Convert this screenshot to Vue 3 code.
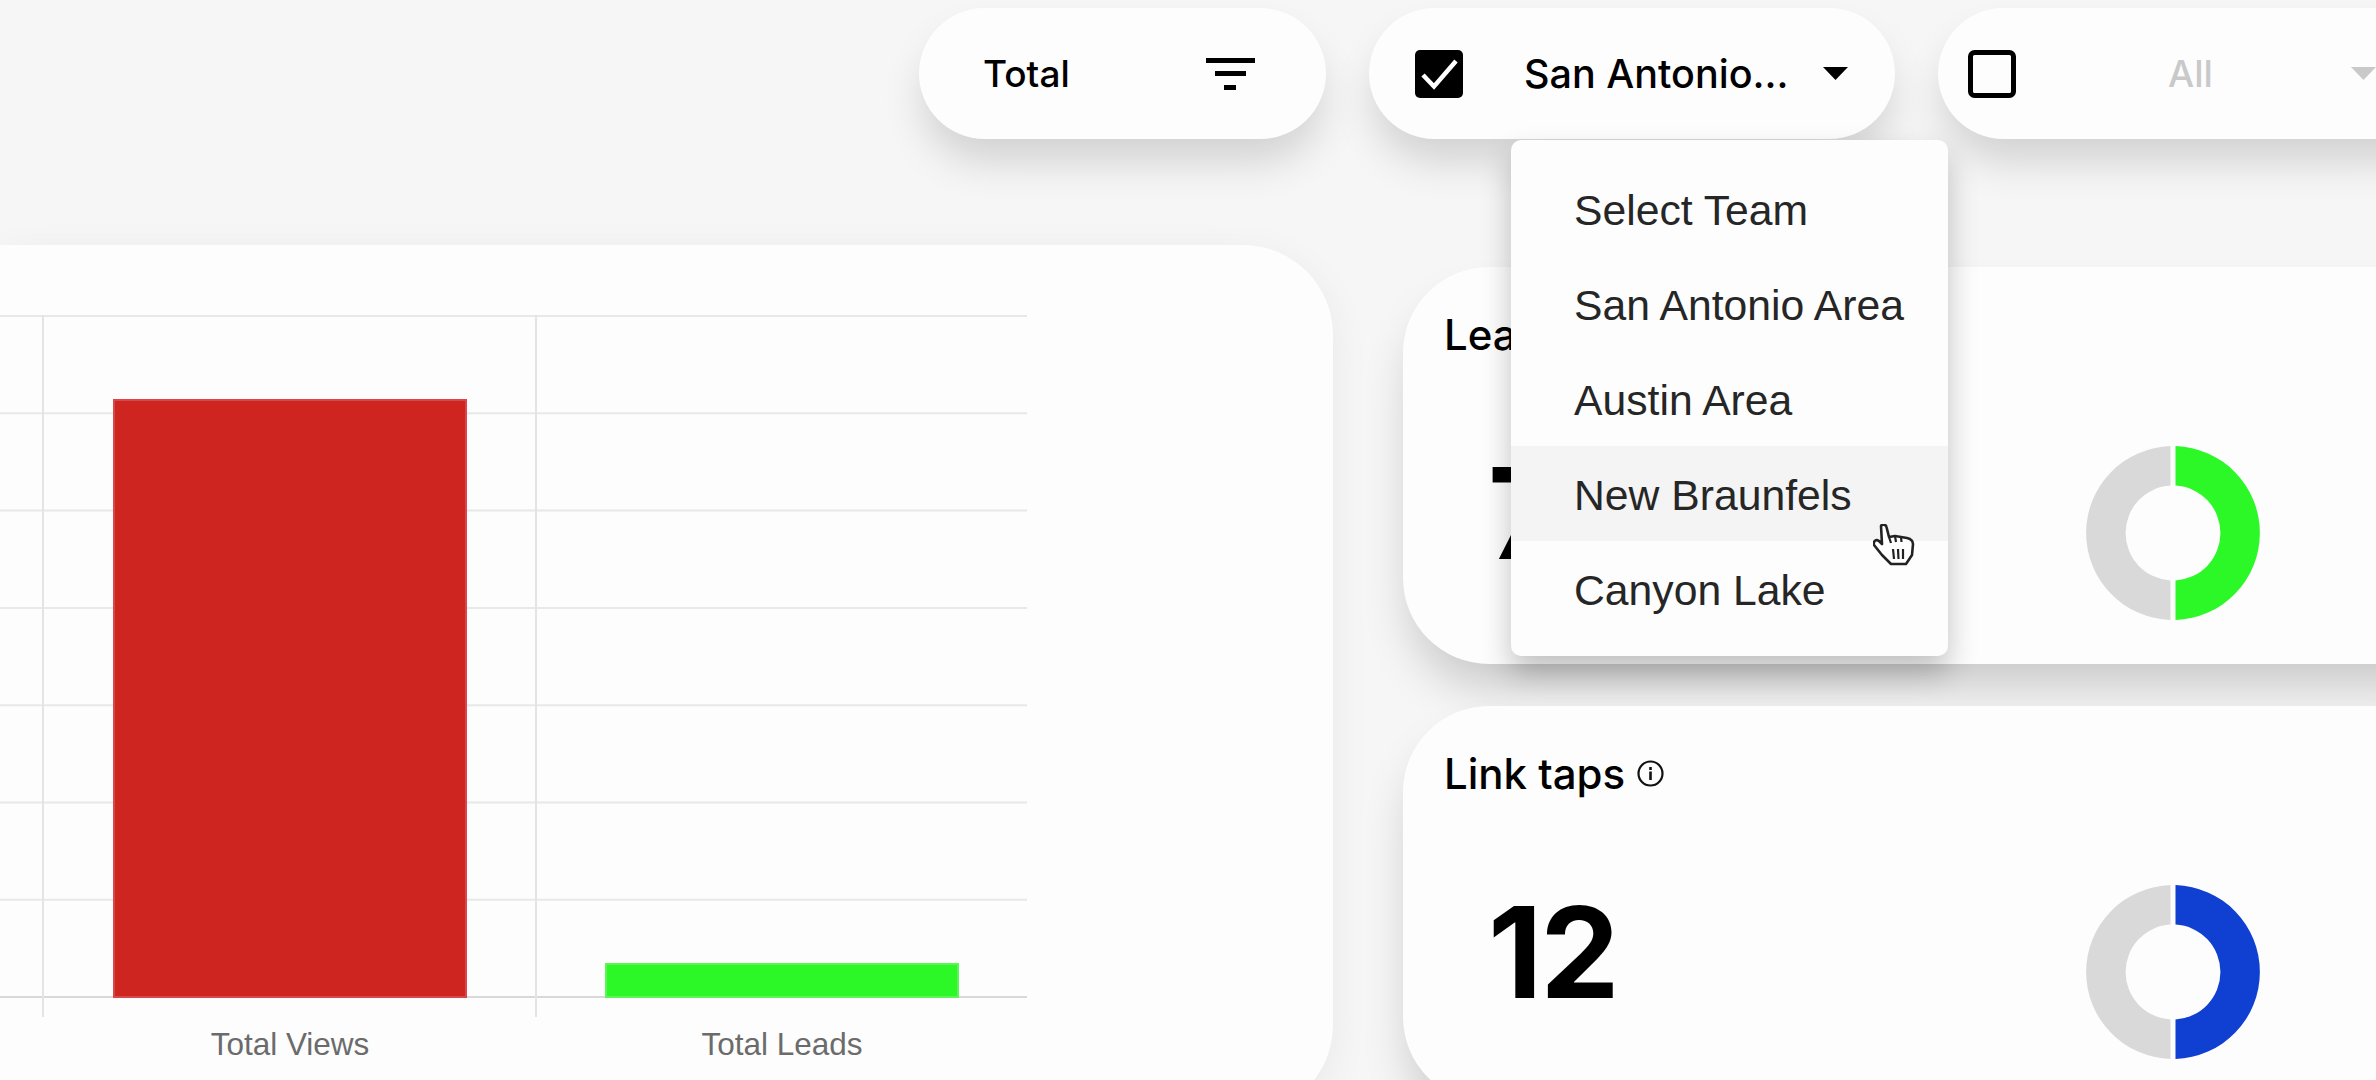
<template>
  <div class="page">
    <!-- top filters -->
    <div class="filters">
      <div class="pill pill-total">
        <span class="pill-label">Total</span>
        <svg class="filter-icon" width="49" height="32" viewBox="0 0 49 32">
          <rect x="0" y="0" width="49" height="5" fill="#000" />
          <rect x="9" y="13" width="31" height="5" fill="#000" />
          <rect x="18" y="27" width="12" height="5" fill="#000" />
        </svg>
      </div>
      <div class="pill pill-team">
        <svg class="check" width="48" height="48" viewBox="0 0 48 48">
          <rect width="48" height="48" rx="5" fill="#000" />
          <path d="M8 25 L19 36.500 L41 11" fill="none" stroke="#fff" stroke-width="4.500" />
        </svg>
        <span class="pill-label team-name">San Antonio...</span>
        <svg class="arrow" width="25" height="13" viewBox="0 0 25 13">
          <path d="M0 0 H25 L12.5 13 Z" fill="#000" />
        </svg>
      </div>
      <div class="pill pill-all">
        <svg class="check" width="48" height="48" viewBox="0 0 48 48">
          <rect x="2.5" y="2.5" width="43" height="43" rx="4" fill="none" stroke="#000" stroke-width="5" />
        </svg>
        <span class="pill-label all-name">All</span>
        <svg class="arrow" width="25" height="13" viewBox="0 0 25 13">
          <path d="M0 0 H25 L12.5 13 Z" fill="#c9c9c9" />
        </svg>
      </div>
    </div>

    <!-- dropdown -->
    <ul class="menu">
      <li v-for="team in teams" :key="team" class="menu-item" :class="{ hover: team === 'New Braunfels' }">{{ team }}</li>
    </ul>

    <!-- mouse pointer -->
    <svg class="cursor" width="42" height="42" viewBox="0 0 42 42">
      <path d="M8 2 C9 0 13 0 13.500 3 L16 13 L22 12 L28 13 L34 14 C38 15 40 17 40 20 L39 31 L33 40 L18 40 L9 31 L1 21 C0 17 3 15 6 17 L9 20 Z" fill="#fff" stroke="#222" stroke-width="2.600" stroke-linejoin="round" />
      <path d="M20 25 L21 35 M25 25 L25.500 35 M30 25 L30 35 M16 13 L18 19 M22 12 L23 18 M28 13 L28.500 18" fill="none" stroke="#222" stroke-width="2.200" />
    </svg>

    <div class="content">
      <!-- bar chart -->
      <section class="chart-card">
        <svg class="chart" width="1027" height="750" viewBox="0 0 1027 750">
          <line v-for="(y, i) in gridLines" :key="i" x1="0" x2="1027" :y1="y" :y2="y" :stroke="i === gridLines.length - 1 ? '#d9d9d9' : '#e8e8e8'" stroke-width="2" />
          <line x1="43" x2="43" y1="0" y2="702" stroke="#e4e4e4" stroke-width="2" />
          <line x1="536" x2="536" y1="0" y2="702" stroke="#e4e4e4" stroke-width="2" />
          <g v-for="bar in bars" :key="bar.label">
            <rect :x="bar.x + 1" :y="baseY - bar.h + 1" width="352" :height="bar.h - 1" :fill="bar.color" :stroke="bar.edge" stroke-width="2" />
            <text class="bar-label" :x="bar.x + 177" y="740" text-anchor="middle">{{ bar.label }}</text>
          </g>
        </svg>
      </section>

      <!-- stat cards -->
      <div class="stats">
        <section v-for="stat in stats" :key="stat.title" class="stat-card">
          <h3 class="stat-title">
            {{ stat.title }}
            <svg class="info" width="27" height="27" viewBox="0 0 27 27">
              <circle cx="13.500" cy="13.500" r="12" fill="none" stroke="#111" stroke-width="2.200" />
              <rect x="12.200" y="7" width="2.600" height="3" fill="#111" />
              <rect x="12.200" y="11.500" width="2.600" height="8.500" fill="#111" />
            </svg>
          </h3>
          <div class="stat-body">
            <span class="stat-value">{{ stat.value }}</span>
            <svg class="donut" width="174" height="174" viewBox="0 0 174 174">
              <path d="M84.500 .04 A87 87 0 0 0 84.500 173.960 L84.500 134.430 A47.500 47.500 0 0 1 84.500 39.570 Z" fill="#d9d9d9" />
              <path d="M89.500 .04 A87 87 0 0 1 89.500 173.960 L89.500 134.430 A47.500 47.500 0 0 0 89.500 39.570 Z" :fill="stat.color" />
            </svg>
          </div>
        </section>
      </div>
    </div>
  </div>
</template>

<script setup>
const teams = ['Select Team', 'San Antonio Area', 'Austin Area', 'New Braunfels', 'Canyon Lake']

// шаг сетки графика
const baseY = 682
const gridLines = Array.from({ length: 8 }, (_, i) => 1 + i * 97.3)

const bars = [
  { label: 'Total Views', x: 113, h: 598, color: '#cf2520', edge: '#d9474a' },
  { label: 'Total Leads', x: 605, h: 34, color: '#2cf827', edge: '#5bf558' }
]

const stats = [
  { title: 'Leads', value: '7', color: '#2cf827' },
  { title: 'Link taps', value: '12', color: '#0f40d2' }
]
</script>

<style scoped>
.page {
  position: relative;
  width: 2376px;
  height: 1080px;
  overflow: hidden;
  background: #f6f6f6;
  font-family: Inter, "Liberation Sans", sans-serif;
  color: #000;
}

.filters {
  display: flex;
  gap: 43px;
  padding: 8px 0 0 919px;
  height: 131px;
}

.pill {
  display: flex;
  align-items: center;
  flex-shrink: 0;
  height: 131px;
  box-sizing: border-box;
  background: #fdfdfd;
  border-radius: 66px;
  box-shadow: 0 26px 44px -6px rgba(0, 0, 0, 0.16);
}

.pill-label {
  font-size: 37px;
  font-weight: 450;
  white-space: nowrap;
}

.pill-total {
  width: 407px;
  padding-left: 64px;
  justify-content: flex-start;
}

.filter-icon {
  margin-left: 136px;
  margin-top: 0;
}

.pill-team {
  width: 526px;
  padding-left: 46px;
}

.team-name {
  margin-left: 61px;
  font-size: 39.500px;
  font-weight: 450;
}

.pill-team .arrow {
  margin-left: 35px;
}

.pill-all {
  width: 520px;
  padding-left: 30px;
}

.all-name {
  margin-left: 152px;
  color: #c9c9c9;
}

.pill-all .arrow {
  margin-left: 138px;
}

.menu {
  position: absolute;
  left: 1511px;
  top: 140px;
  width: 437px;
  height: 516px;
  box-sizing: border-box;
  margin: 0;
  padding: 21px 0 0;
  list-style: none;
  background: #fdfdfd;
  border-radius: 10px;
  box-shadow: 0 16px 30px rgba(0, 0, 0, 0.24);
  z-index: 2;
}

.menu-item {
  height: 95px;
  line-height: 98px;
  padding-left: 63px;
  font-family: "Liberation Sans", Arial, sans-serif;
  font-size: 42.700px;
  color: #262626;
  white-space: nowrap;
}

.menu-item.hover {
  background: #f4f4f4;
}

.cursor {
  position: absolute;
  left: 1873px;
  top: 524px;
  z-index: 3;
}

.content {
  display: grid;
  grid-template-columns: 1333px 1043px;
  column-gap: 70px;
  margin-top: 106px;
}

.chart-card {
  width: 1333px;
  height: 870px;
  box-sizing: border-box;
  padding-top: 70px;
  background: #fdfdfd;
  border-radius: 0 90px 90px 0;
  box-shadow: 0 10px 40px rgba(0, 0, 0, 0.06);
}

.chart {
  display: block;
}

.bar-label {
  font-family: "Liberation Sans", Arial, sans-serif;
  font-size: 31.500px;
  fill: #6b6b6b;
}

.stats {
  display: flex;
  flex-direction: column;
  gap: 42px;
  width: 1100px;
  padding-top: 22px;
}

.stat-card {
  flex-shrink: 0;
  height: 397px;
  box-sizing: border-box;
  padding: 37px 0 0 41px;
  background: #fdfdfd;
  border-radius: 86px;
  box-shadow: 0 30px 50px -10px rgba(0, 0, 0, 0.2);
}

.stat-title {
  display: flex;
  align-items: center;
  gap: 12px;
  margin: 0;
  height: 60px;
  font-size: 42px;
  font-weight: 450;
}

.stat-body {
  display: flex;
  align-items: flex-start;
  margin-top: 82px;
}

.stat-value {
  width: 642px;
  margin-top: 2px;
  padding-left: 44px;
  box-sizing: border-box;
  font-size: 126px;
  font-weight: 700;
  line-height: 130px;
  letter-spacing: -2px;
}

.donut {
  display: block;
  flex-shrink: 0;
}
</style>

<style>
body {
  background: #f6f6f6;
}
</style>
